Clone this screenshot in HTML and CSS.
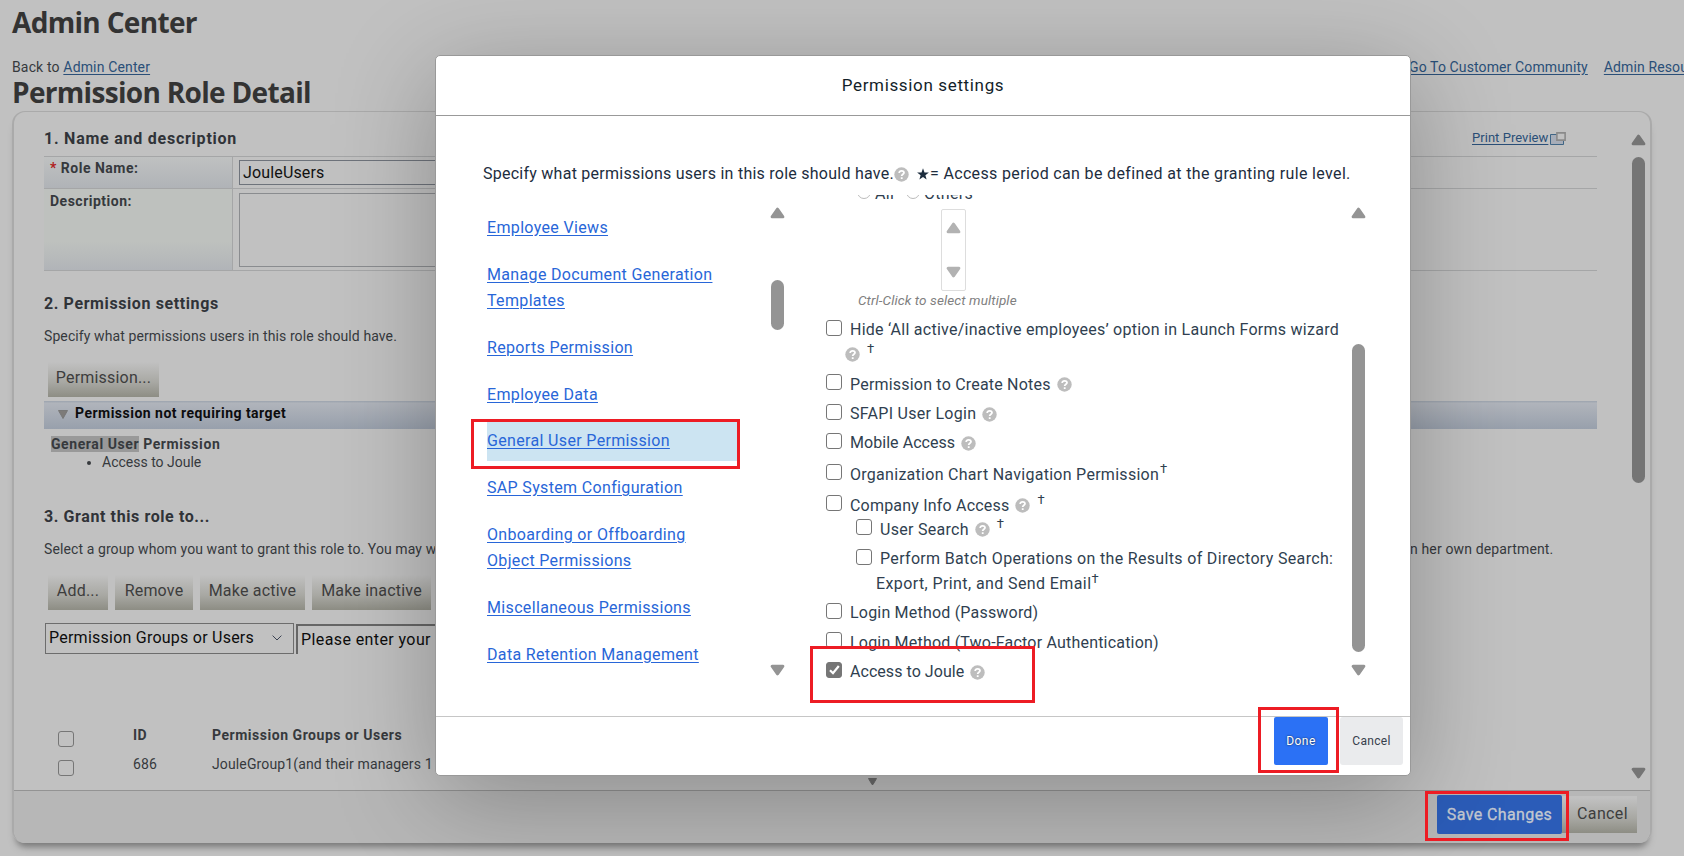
FILE: index.html
```html
<!DOCTYPE html>
<html lang="en">
<head>
<meta charset="utf-8">
<title>Admin Center</title>
<link rel="stylesheet" href="styles.css">
</head>
<body>
<svg width="0" height="0" class="defs" aria-hidden="true">
  <symbol id="up" viewBox="0 0 15 12"><path d="M7.5 2.2 12.9 9.8H2.1Z" fill="currentColor" stroke="currentColor" stroke-width="3" stroke-linejoin="round"/></symbol>
  <symbol id="down" viewBox="0 0 15 12"><path d="M7.5 9.8 12.9 2.2H2.1Z" fill="currentColor" stroke="currentColor" stroke-width="3" stroke-linejoin="round"/></symbol>
  <symbol id="help" viewBox="0 0 15 15"><circle cx="7.5" cy="7.5" r="7.2" fill="#bdbdbd"/><path d="M5.2 6.1C5.2 4.6 6.2 3.8 7.6 3.8S10 4.6 10 5.8C10 7.2 7.7 7.3 7.7 8.9M7.7 10.2V12" fill="none" stroke="#fff" stroke-width="1.8"/></symbol>
</svg>

<div class="page">
  <h1>Admin Center</h1>
  <div class="crumbs">
    <span>Back to <a href="#">Admin Center</a></span>
    <span class="top-links"><a href="#">Go To Customer Community</a><a href="#">Admin Resources</a></span>
  </div>
  <h1 class="detail">Permission Role Detail</h1>

  <main class="panel">
    <div class="panel-body">
      <div class="content">
        <div class="section-head">
          <h2>1. Name and description</h2>
          <a class="print" href="#">Print Preview</a><svg class="popup" width="16" height="13" viewBox="0 0 16 13"><path d="M.5 2.5H13.5V12.5H.5Z" fill="#a7adb8" stroke="#3f6585"/><path d="M6.9.9H15.1V8.1H6.9Z" fill="#c1c1c1" stroke="#8a8a8a" stroke-width="1.6"/></svg>
        </div>
        <div class="form">
          <div class="form-row">
            <div class="label first"><span class="req">*</span> Role Name:</div>
            <div class="field"><div class="input">JouleUsers</div></div>
          </div>
          <div class="form-row tall">
            <div class="label second">Description:</div>
            <div class="field"><div class="textarea"></div></div>
          </div>
        </div>

        <h2 class="s2">2. Permission settings</h2>
        <p>Specify what permissions users in this role should have.</p>
        <div class="buttons"><button class="old w111">Permission...</button></div>
        <div class="bar"><svg width="10" height="9" viewBox="0 0 10 9"><path d="M.5.5H9.5L5 8.5Z" fill="#7d7b79" stroke="#777"/></svg><b>Permission not requiring target</b></div>
        <div class="perm"><mark>General User</mark> Permission</div>
        <ul><li>Access to Joule</li></ul>

        <h2 class="s3">3. Grant this role to...</h2>
        <div class="grant"><p>Select a group whom you want to grant this role to. You may w</p><p class="tail">n her own department.</p></div>
        <div class="buttons">
          <button class="old w60">Add...</button><button class="old w78">Remove</button><button class="old w105">Make active</button><button class="old w119">Make inactive</button>
        </div>
        <div class="picker">
          <div class="select">Permission Groups or Users<svg width="10" height="6" viewBox="0 0 10 6"><path d="M.6.6 5 5 9.4.6" fill="none" stroke="#3b4252"/></svg></div>
          <div class="search">Please enter your</div>
        </div>
        <div class="groups">
          <i class="box"></i><b>ID</b><b>Permission Groups or Users</b>
          <i class="box"></i><span>686</span><span>JouleGroup1(and their managers 1</span>
        </div>
        <svg class="more" width="9" height="7" viewBox="0 0 9 7"><path d="M.5.5H8.5L5 6.5H4Z" fill="#6c6c6c" stroke="#6c6c6c"/></svg>
      </div>
      <div class="scroll page-scroll">
        <svg width="15" height="12"><use href="#up"/></svg>
        <div class="thumb"></div>
        <svg class="end" width="15" height="12"><use href="#down"/></svg>
      </div>
    </div>
    <footer class="panel-foot">
      <button class="save">Save Changes</button><button class="old w75">Cancel</button>
    </footer>
  </main>
</div>

<section class="dialog">
  <header>Permission settings</header>
  <div class="dialog-body">
    <div class="intro"><span>Specify what permissions users in this role should have.</span><svg width="15" height="15"><use href="#help"/></svg><svg class="star" width="12" height="12" viewBox="0 0 12 12"><path d="M6 .3 7.5 4.4 11.9 4.5 8.4 7.2 9.6 11.5 6 9 2.4 11.5 3.6 7.2.1 4.5 4.5 4.4Z" fill="#1d2d3e"/></svg><span>= Access period can be defined at the granting rule level.</span></div>
    <div class="columns">
      <nav>
        <a href="#">Employee Views</a>
        <a href="#">Manage Document Generation<br>Templates</a>
        <a href="#">Reports Permission</a>
        <a href="#">Employee Data</a>
        <a href="#" class="active">General User Permission</a>
        <a href="#">SAP System Configuration</a>
        <a href="#">Onboarding or Offboarding<br>Object Permissions</a>
        <a href="#">Miscellaneous Permissions</a>
        <a href="#">Data Retention Management</a>
      </nav>
      <div class="scroll nav-scroll">
        <svg width="15" height="12"><use href="#up"/></svg>
        <div class="thumb"></div>
        <svg class="end" width="15" height="12"><use href="#down"/></svg>
      </div>
      <div class="perms">
        <div class="radios"><i></i><span class="all">All</span><i></i><span>Others</span></div>
        <div class="listbox"><svg width="15" height="12"><use href="#up"/></svg><svg width="15" height="12"><use href="#down"/></svg></div>
        <div class="hint">Ctrl-Click to select multiple</div>
        <div class="row h54"><i class="box"></i><div><span class="hide">Hide ‘All active/inactive employees’ option in Launch Forms wizard</span><div class="second-line"><svg width="15" height="15"><use href="#help"/></svg><sup>†</sup></div></div></div>
        <div class="row h30 low"><i class="box"></i><span class="snug">Permission to Create Notes</span><svg width="15" height="15"><use href="#help"/></svg></div>
        <div class="row h29"><i class="box"></i><span>SFAPI User Login</span><svg width="15" height="15"><use href="#help"/></svg></div>
        <div class="row h31"><i class="box"></i><span class="tight">Mobile Access</span><svg width="15" height="15"><use href="#help"/></svg></div>
        <div class="row h31 low"><i class="box"></i><span>Organization Chart Navigation Permission</span><sup>†</sup></div>
        <div class="row h24 low"><i class="box"></i><span class="snug">Company Info Access</span><svg width="15" height="15"><use href="#help"/></svg><sup class="gap">†</sup></div>
        <div class="row h30 child low"><i class="box"></i><span>User Search</span><svg width="15" height="15"><use href="#help"/></svg><sup class="gap">†</sup></div>
        <div class="row h54 child"><i class="box"></i><div><span class="wide">Perform Batch Operations on the Results of Directory Search:</span><div class="export">Export, Print, and Send Email<sup>†</sup></div></div></div>
        <div class="row h29"><i class="box"></i><span class="snug">Login Method (Password)</span></div>
        <div class="row h30 low"><i class="box"></i><span class="snug">Login Method (Two-Factor Authentication)</span></div>
        <div class="row h29"><i class="box checked"><svg width="11" height="10" viewBox="0 0 11 10"><path d="M1 5.2 4 8.2 9.8 1" fill="none" stroke="#fff" stroke-width="2.2"/></svg></i><span class="tight">Access to Joule</span><svg width="15" height="15"><use href="#help"/></svg></div>
      </div>
      <div class="scroll perm-scroll">
        <svg width="15" height="12"><use href="#up"/></svg>
        <div class="thumb"></div>
        <svg class="end" width="15" height="12"><use href="#down"/></svg>
      </div>
    </div>
  </div>
  <footer><button class="done">Done</button><button class="cancel">Cancel</button></footer>
</section>

<div class="callout c-nav"></div>
<div class="callout c-joule"></div>
<div class="callout c-done"></div>
<div class="callout c-save"></div>
</body>
</html>
```
FILE: styles.css
```css
* { box-sizing: border-box; }
body {
  margin: 0;
  width: 1684px;
  height: 856px;
  overflow: hidden;
  background: #c1c1c1;
  color: #36393d;
  font: 14px/20px Roboto, "Liberation Sans", sans-serif;
  letter-spacing: .1px;
}
.defs { display: block; position: absolute; }
svg { display: block; flex: none; }
h1, h2, p, ul { margin: 0; }
button { border: 0; padding: 0; font: inherit; letter-spacing: inherit; }
a { color: #2a4f78; text-decoration: underline; text-underline-offset: 2px; }

.page { padding: 4px 0 0 12px; }
h1 {
  font: 700 28px/36px "Open Sans", sans-serif;
  letter-spacing: -.68px;
  color: #333;
  white-space: nowrap;
}
h1.detail { margin: -3px 0 1px; }
.crumbs { display: flex; margin-top: 17px; width: 1672px; overflow: hidden; white-space: nowrap; }
.crumbs > span:first-child { width: 1397px; flex: none; letter-spacing: .15px; }
.top-links { display: flex; gap: 16px; letter-spacing: .12px; }

.panel {
  width: 1640px;
  height: 732px;
  border: solid #aaa;
  border-width: 1px 2px 0;
  border-radius: 13px;
  box-shadow: 0 8px 7px -4px #777;
  overflow: hidden;
}
.panel-body { display: flex; height: 678px; padding-left: 30px; }
.content { width: 1553px; padding-top: 17px; flex: none; }
h2 { font: 700 16px/20px Roboto, sans-serif; letter-spacing: .6px; color: #303338; white-space: nowrap; }
.section-head { display: flex; height: 20px; }
.section-head h2 { width: 1428px; letter-spacing: .76px; }
.print { font-size: 13px; letter-spacing: .04px; line-height: 18px; white-space: nowrap; }
.popup { margin: 3px 0 0 2px; }

.form { margin-top: 7px; border-top: 1px solid #a5a6a7; }
.form-row { display: flex; height: 32px; border-bottom: 1px solid #a5a6a7; }
.form-row.tall { height: 82px; }
.label {
  width: 189px;
  padding: 1px 0 0 6px;
  border-right: 1px solid #a5a6a7;
  background: linear-gradient(#bfc1c1, #b0b3b7);
  font-weight: 700;
  letter-spacing: .5px;
}
.label.second { background: linear-gradient(#bec1be 65%, #b1b4b8); padding-top: 2px; }
.req { color: #b01c1c; }
.field { padding: 3px 0 0 6px; }
.input { width: 240px; height: 25px; border: 1px solid #6e737b; padding: 2px 3px; font-size: 16px; letter-spacing: .15px; color: #111; }
.textarea { width: 240px; height: 74px; border: 1px solid #8a8c8f; margin-top: 1px; }

.s2 { margin-top: 23px; }
p { margin-top: 12px; white-space: nowrap; }
.buttons { display: flex; gap: 7px; margin: 14px 0 4px 4px; }
.old {
  height: 37px;
  padding-bottom: 2px;
  background: linear-gradient(#c1c1c1 5%, #a8a8a3 60%, #8d8d84);
  color: #3d3d3d;
  font-size: 16px;
  letter-spacing: .2px;
}
.w111 { width: 111px; } .w60 { width: 60px; } .w78 { width: 78px; }
.w105 { width: 105px; } .w119 { width: 119px; } .w75 { width: 75px; }
.bar {
  display: flex;
  align-items: center;
  gap: 7px;
  height: 28px;
  padding: 0 0 4px 14px;
  background: linear-gradient(#9ba3ae, #b0b4bb 8%, #98a0ac);
  color: #0c0c0e;
  letter-spacing: .48px;
}
.bar svg { margin-top: 3px; }
.perm { margin: 6px 0 0 7px; font-weight: 700; line-height: 18px; letter-spacing: .58px; }
mark { background: #999; color: inherit; display: inline-block; height: 16px; line-height: 17px; }
ul { padding-left: 58px; line-height: 18px; letter-spacing: 0; }
.s3 { margin-top: 36px; }
.grant { display: flex; }
.grant p { width: 1366px; }
.grant .tail { width: auto; letter-spacing: .14px; }
.picker { display: flex; gap: 2px; margin: 13px 0 0 1px; color: #0d0d0d; font-size: 16px; letter-spacing: .24px; }
.select { display: flex; justify-content: space-between; align-items: center; width: 249px; height: 31px; padding: 0 11px 1px 3px; border: 1px solid #6d6d6d; }
.search { width: 300px; height: 30px; margin-top: 1px; border: solid #666; border-width: 2px 0 0 2px; padding: 4px 0 0 3px; letter-spacing: .4px; }
.groups { display: grid; grid-template-columns: 75px 79px 300px; grid-auto-rows: 29px; margin: 71px 0 0 14px; }
.groups b { letter-spacing: .53px; }
.groups span { letter-spacing: .13px; }
.groups .box { margin-top: 6px; }
.box { display: block; width: 16px; height: 16px; flex: none; border: 1.5px solid #767676; border-radius: 3px; }
.more { margin: -5px 0 0 824px; }

.scroll { display: flex; flex-direction: column; align-items: center; width: 15px; flex: none; color: #949494; }
.thumb { width: 13px; border-radius: 7px; background: #949494; }
.end { margin-top: auto; }
.page-scroll { color: #757575; margin: 22px 0 11px 34px; }
.page-scroll .thumb { margin-top: 11px; height: 326px; background: #757575; }
.panel-foot { display: flex; height: 53px; padding: 4px 0 0 1423px; border-top: 1px solid #939393; background: #b7b7b7; }
.save { width: 125px; height: 39px; border-radius: 2px; background: #2b5cb8; color: #c3c8d0; font-size: 16px; letter-spacing: .4px; -webkit-text-stroke: .3px; }
.panel-foot .old { margin-top: 1px; padding: 0 0 1px 6px; letter-spacing: .38px; }

.dialog {
  position: absolute;
  left: 435px;
  top: 55px;
  width: 976px;
  height: 721px;
  border: 1px solid #999;
  border-radius: 5px;
  background: #fff;
  color: #1d2d3e;
  font-size: 16px;
  letter-spacing: .28px;
  box-shadow: 0 22px 100px rgba(0, 0, 0, .28);
  white-space: nowrap;
}
.dialog header { height: 60px; padding-top: 19px; border-bottom: 1px solid #999; text-align: center; font-size: 17px; letter-spacing: .65px; color: #131e29; }
.dialog-body { height: 600px; padding: 48px 0 0 47px; }
.intro { display: flex; align-items: center; height: 20px; letter-spacing: .25px; }
.intro svg { margin-top: 1px; }
.intro .star { margin: 0 1px 0 8px; }
.intro span:last-child { letter-spacing: .35px; }
.columns { display: flex; height: 485px; margin-top: 11px; }
nav { width: 254px; padding: 13px 0 0 4px; line-height: 26px; letter-spacing: .34px; }
nav a { display: block; padding: 7px 0; margin-bottom: 6.85px; color: #2866d8; }
nav .active { background: #cce4f2; }
.nav-scroll { margin: 12px 0 4px 33px; height: 469px; }
.nav-scroll .thumb { height: 50px; margin-top: 61px; }
.perms { width: 524px; margin-left: 41px; color: #303f50; overflow: hidden; }
.radios { display: flex; gap: 4px; height: 14px; margin-left: 31px; }
.radios span { margin-top: -11px; }
.radios i { width: 14px; height: 14px; margin-top: -10px; border: 1.5px solid #bbb; border-radius: 50%; }
.radios .all { margin-right: 8px; }
.listbox { display: flex; flex-direction: column; justify-content: space-between; align-items: center; width: 25px; height: 82px; margin-left: 115px; padding: 12px 0; border: 1px solid #ddd; border-radius: 2px; color: #b2b2b2; }
.hint { margin: -1px 0 0 32px; color: #808080; font: italic 13.5px/20px Roboto, sans-serif; letter-spacing: .1px; }
.row { display: flex; align-items: flex-start; }
.row > span, .row > div { margin-left: 8px; }
.row > svg { margin: 3px 0 0 6px; }
.low > * { margin-top: 1px; }
.low > .box { margin-top: 0; }
.hint + .row { margin-top: 10px; }
.h54 { height: 54px; } .h31 { height: 31px; } .h30 { height: 30px; } .h29 { height: 29px; } .h24 { height: 24px; }
.child { padding-left: 30px; }
.second-line { display: flex; margin: 7px 0 0 -5px; gap: 7px; }
.second-line sup { margin-top: -5px; }
sup { font-size: 13px; line-height: 14px; vertical-align: 6px; }
.row > sup { margin: -2px 0 0 1px; }
.row > .gap { margin-left: 7px; }
.hide { letter-spacing: .26px; }
.snug { letter-spacing: .2px; }
.tight { letter-spacing: .05px; }
.wide { letter-spacing: .33px; }
.export { margin: 3px 0 0 -4px; letter-spacing: .4px; }
.checked { display: grid; place-items: center; background: #767676; }
.perm-scroll { margin: 12px 0 4px 1px; height: 469px; }
.perm-scroll .thumb { height: 308px; margin-top: 125px; }
.dialog footer { display: flex; justify-content: flex-end; gap: 12px; height: 59px; padding-right: 7px; border-top: 1px solid #c6c6c6; font-size: 12px; letter-spacing: .4px; }
.done { width: 54px; height: 48px; border-radius: 2px; background: #2b71f5; color: #fff; text-shadow: 0 0 2px #123; }
.cancel { width: 63px; height: 48px; border-radius: 3px; background: #eaebed; color: #36404c; letter-spacing: .3px; }

/* Highlight frames over the interface */
.callout { position: absolute; border: 3px solid #ed1c24; }
.c-nav { left: 471px; top: 419px; width: 269px; height: 50px; }
.c-joule { left: 810px; top: 646px; width: 225px; height: 57px; }
.c-done { left: 1258px; top: 707px; width: 81px; height: 66px; }
.c-save { left: 1425px; top: 791px; width: 144px; height: 50px; }
```
